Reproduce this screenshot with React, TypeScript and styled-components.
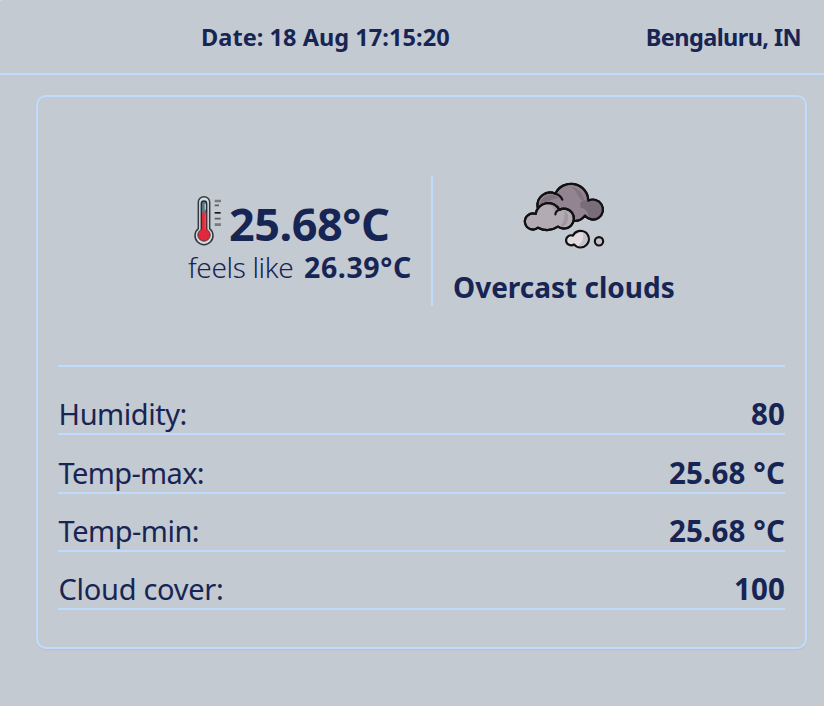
import React from "react";
import styled, { createGlobalStyle } from "styled-components";

const NAVY = "#172554";
const LINE = "#bfdbfe";

const GlobalStyle = createGlobalStyle`
  * { box-sizing: border-box; }
  body {
    margin: 0;
    background: #c4cad1;
    color: ${NAVY};
    font-family: "Noto Sans", "Open Sans", sans-serif;
  }
`;

const Page = styled.div`
  position: relative;
  min-height: 706px;
  overflow: hidden;

  &::before {
    content: "";
    position: absolute;
    top: 0;
    left: 0;
    width: 2px;
    height: 1px;
    background: ${LINE};
  }
`;

const Header = styled.header`
  height: 75px;
  padding: 1px 23px 0 201px;
  border-bottom: 2px solid ${LINE};
  display: flex;
  align-items: center;
  justify-content: space-between;
`;

const HeaderText = styled.span<{ $spacing: number }>`
  font-size: 23.5px;
  line-height: 32px;
  font-weight: 700;
  white-space: nowrap;
  letter-spacing: ${(p) => p.$spacing}px;
`;

const Card = styled.main`
  width: 771px;
  height: 554px;
  margin: 20px 0 0 36px;
  padding: 0 20px;
  border: 2px solid ${LINE};
  border-radius: 10px;
  box-shadow: 0 1px 2px rgba(0, 0, 0, 0.06);
`;

const Summary = styled.section`
  height: 270px;
  padding-top: 79px;
  border-bottom: 2px solid ${LINE};
  display: flex;
  align-items: flex-start;
`;

const Temperature = styled.div`
  width: 375px;
  height: 130px;
  padding: 19px 0 0 130px;
  border-right: 2px solid ${LINE};
`;

const Reading = styled.div`
  display: flex;
  align-items: center;
  height: 52px;
`;

const Degrees = styled.span`
  margin-left: 6px;
  padding-top: 6px;
  font-size: 45px;
  line-height: 52px;
  font-weight: 700;
  white-space: nowrap;
  letter-spacing: -0.45px;
`;

const FeelsLike = styled.div`
  display: flex;
  height: 40px;
  line-height: 40px;
  white-space: nowrap;
`;

const FeelsLabel = styled.span`
  width: 116px;
  font-size: 28px;
  font-weight: 300;
  letter-spacing: -0.35px;
`;

const FeelsValue = styled.span`
  font-size: 28.5px;
  font-weight: 700;
  letter-spacing: 0.6px;
`;

const Condition = styled.div`
  padding: 7px 0 0 20px;
  display: flex;
  flex-direction: column;
`;

const ConditionText = styled.span`
  margin-top: 8px;
  font-size: 28px;
  line-height: 40px;
  font-weight: 700;
  white-space: nowrap;
`;

const Details = styled.dl`
  margin: 0;
  padding-top: 9px;
`;

const Row = styled.div<{ $height: number }>`
  height: ${(p) => p.$height}px;
  border-bottom: 2px solid ${LINE};
  display: flex;
  align-items: flex-end;
  justify-content: space-between;
  font-size: 29px;
  line-height: 38px;
`;

const Label = styled.dt<{ $spacing: number }>`
  padding-left: 0.6px;
  white-space: nowrap;
  letter-spacing: ${(p) => p.$spacing}px;
`;

const Value = styled.dd`
  margin: 0;
  font-size: 29.5px;
  font-weight: 700;
  white-space: nowrap;
  letter-spacing: 0.15px;
`;

const ThermometerSvg = styled.svg`
  display: block;
  flex: none;
  margin-left: 5px;
`;

const CloudSvg = styled.svg`
  display: block;
  margin-left: 71px;
  overflow: visible;
`;

const Thermometer = () => (
  <ThermometerSvg width="30" height="52" viewBox="39 44 90 156">
    <path
      d="M55 65a17 16 0 0 1 34 0V145a27 27 0 1 1-34 0z"
      fill="#d3dee4"
      stroke="#34383d"
      strokeWidth="4.500"
    />
    <path d="M64 148V70a8 8 0 0 1 16 0V148" fill="#5f7886" stroke="#262d34" strokeWidth="4.500" />
    <path d="M76 70V88" stroke="#a9c6d4" strokeWidth="4" />
    <circle cx="72" cy="164" r="18.500" fill="#e02a3b" stroke="#5e2f38" strokeWidth="3" />
    <path d="M66 97H79V154H66z" fill="#e02a3b" />
    <path d="M75.500 99V147" stroke="#ee5361" strokeWidth="3" />
    <path d="M104 62H123M104 133H123" stroke="#777c82" strokeWidth="8" />
    <path d="M104 75H117M104 115H122" stroke="#5b5f65" strokeWidth="5" />
    <path d="M104 97.500H122" stroke="#15171a" strokeWidth="5" />
  </ThermometerSvg>
);

const Clouds = () => (
  <CloudSvg width="81" height="76" viewBox="27 24 243 228">
    <g stroke="#111" strokeWidth="6.500" strokeLinecap="round" strokeLinejoin="round">
      <path
        d="M68 98A38 38 0 0 1 121 56A52 52 0 0 1 220 77A30 30 0 1 1 210 122Q198 138 180 138L110 130Z"
        fill="#928491"
      />
      <path d="M192 36Q211 47 214 76Q192 72 196 98Q218 100 222 127A28 28 0 0 0 258 88Q244 72 221 79Q218 48 192 36Z" fill="#796d7a" stroke="none" />
      <path d="M165 34Q202 40 209 77Q196 78 188 60Q182 43 165 34Z" fill="#82757f" stroke="none" />
      <path d="M73 88Q80 63 107 59Q122 60 132 69Q108 72 92 84Z" fill="#807380" stroke="none" />
      <path
        d="M68 98A38 38 0 0 1 121 56A52 52 0 0 1 220 77A30 30 0 1 1 210 122Q198 138 180 138M121 56Q136 60 142 74"
        fill="none"
      />
      <path
        d="M62 117A38 38 0 0 1 133 104A30 30 0 1 1 129 155Q100 174 69 158A24 24 0 1 1 62 117Z"
        fill="#b3abb3"
      />
      <path d="M148 106A26 28 0 0 1 135 157Q152 134 148 106Z" fill="#a198a2" stroke="none" />
      <path d="M100 87Q120 89 127 103Q118 108 121 118Q119 96 100 87Z" fill="#a198a2" stroke="none" />
      <path
        d="M62 117A38 38 0 0 1 133 104A30 30 0 1 1 129 155Q100 174 69 158A24 24 0 1 1 62 117ZM139 103Q122 105 121 118"
        fill="none"
      />
      <path d="M174 182A25 25 0 1 1 177 208A15 15 0 1 1 174 182Z" fill="#e2dce1" />
      <path d="M203 171A21 21 0 0 1 190 212Q210 197 203 171Z" fill="#c7c0c8" stroke="none" />
      <circle cx="252" cy="199" r="12.500" fill="#c5bfc7" />
    </g>
  </CloudSvg>
);

const rows = [
  { label: "Humidity:", value: "80", height: 59, spacing: -0.45 },
  { label: "Temp-max:", value: "25.68 °C", height: 59, spacing: -0.65 },
  { label: "Temp-min:", value: "25.68 °C", height: 58, spacing: -0.5 },
  { label: "Cloud cover:", value: "100", height: 58, spacing: -0.3 },
];

export default function App() {
  return (
    <Page>
      <GlobalStyle />
      <Header>
        <HeaderText $spacing={0.05}>Date: 18 Aug 17:15:20</HeaderText>
        <HeaderText $spacing={-0.6}>Bengaluru, IN</HeaderText>
      </Header>
      <Card>
        <Summary>
          <Temperature>
            <Reading>
              <Thermometer />
              <Degrees>25.68°C</Degrees>
            </Reading>
            <FeelsLike>
              <FeelsLabel>feels like</FeelsLabel>
              <FeelsValue>26.39°C</FeelsValue>
            </FeelsLike>
          </Temperature>
          <Condition>
            <Clouds />
            <ConditionText>Overcast clouds</ConditionText>
          </Condition>
        </Summary>
        <Details>
          {rows.map((row) => (
            <Row key={row.label} $height={row.height}>
              <Label $spacing={row.spacing}>{row.label}</Label>
              <Value>{row.value}</Value>
            </Row>
          ))}
        </Details>
      </Card>
    </Page>
  );
}
